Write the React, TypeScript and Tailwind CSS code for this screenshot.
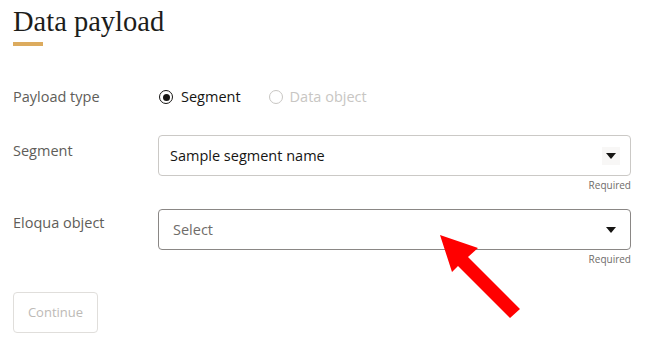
import React from 'react';

const Caret = () => (
  <svg width="10" height="6" viewBox="0 0 10 6" className="block">
    <path d="M0 0h10L5 6z" fill="#161513" />
  </svg>
);

export default function App() {
  return (
    <div className="relative w-[663px] h-[347px] bg-white overflow-hidden font-['Open_Sans',sans-serif] text-[#161513]">
      <div className="pl-[13px] pt-[4px]">
        <h1 className="font-['Liberation_Serif',serif] text-[28.5px] leading-[35px] text-[#1d1d1b]">Data payload</h1>
        <div className="mt-[3px] w-[30px] h-[4px] bg-[#dcab5e]" />

        {/* Payload type */}
        <div className="flex items-center mt-[39px] h-[24px]">
          <div className="w-[146px] text-[14.5px] text-[#605d59]">Payload type</div>
          <label className="flex items-center gap-[8px] text-[14.5px]">
            <span className="w-[14px] h-[14px] rounded-full border-[1.5px] border-[#161513] flex items-center justify-center">
              <span className="w-[7px] h-[7px] rounded-full bg-[#161513]" />
            </span>
            Segment
          </label>
          <label className="flex items-center gap-[7px] ml-[28px] text-[14.5px] text-[#c8c6c3]">
            <span className="w-[14px] h-[14px] rounded-full border border-[#c8c6c3]" />
            Data object
          </label>
        </div>

        {/* Segment */}
        <div className="flex mt-[26px]">
          <div className="w-[145px] text-[14.5px] text-[#605d59] pt-[5px]">Segment</div>
          <div className="w-[473px]">
            <div className="h-[41px] border border-[#cbc9c6] rounded-[4px] flex items-center pl-[11px] pr-[10px]">
              <span className="flex-1 text-[14.5px]">Sample segment name</span>
              <span className="w-[18px] h-[18px] bg-[#f8f7f6] flex items-center justify-center"><Caret /></span>
            </div>
            <div className="text-right text-[10px] text-[#6f6c69] mt-[2px] leading-[14px]">Required</div>
          </div>
        </div>

        {/* Eloqua object */}
        <div className="flex mt-[17px]">
          <div className="w-[145px] text-[14.5px] text-[#605d59] pt-[3px]">Eloqua object</div>
          <div className="w-[473px]">
            <div className="h-[41px] border border-[#8a8785] rounded-[4px] flex items-center pl-[14px] pr-[14px]">
              <span className="flex-1 text-[14.5px] text-[#6f6c69]">Select</span>
              <Caret />
            </div>
            <div className="text-right text-[10px] text-[#6f6c69] mt-[2px] leading-[14px]">Required</div>
          </div>
        </div>

        <button className="mt-[26px] w-[85px] h-[41px] border border-[#e0dedb] rounded-[4px] text-[13px] text-[#bdbab6]">
          Continue
        </button>
      </div>

      <svg className="absolute left-0 top-0 pointer-events-none" width="663" height="347">
        <polygon points="440,235 478,248 468,257 520,309 510,318 458,266 452,272" fill="#ff0000" />
      </svg>
    </div>
  );
}
